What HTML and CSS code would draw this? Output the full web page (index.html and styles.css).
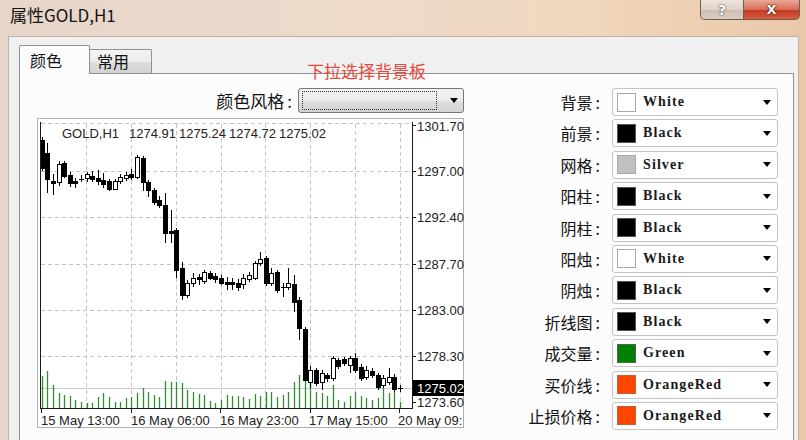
FILE: index.html
```html
<!DOCTYPE html>
<html>
<head>
<meta charset="utf-8">
<title>属性GOLD,H1</title>
<link rel="stylesheet" href="styles.css">
</head>
<body>
<div class="window">
  <div class="titlebar">
    <div class="title">属性GOLD,H1</div>
    <div class="caption-btns">
      <div class="cbtn help">?</div>
      <div class="cbtn close">X</div>
    </div>
  </div>
  <div class="client">
    <div class="tabs">
      <div class="tab active">颜色</div>
      <div class="tab inactive">常用</div>
    </div>
    <div class="page">
      <div class="note">下拉选择背景板</div>
      <div class="left">
        <div class="style-row">
          <span class="lbl">颜色风格<span class="colon">:</span></span>
          <div class="style-combo"><div class="focus"></div><span class="arrow"></span></div>
        </div>
        <div class="chart">
          <svg id="chart-svg" width="427" height="310" viewBox="37 118 427 310">
            <rect x="37.5" y="118.5" width="426" height="309" fill="#fff" stroke="#b0b0b0"/>
            <g stroke="#c4c4c4" stroke-dasharray="4 3">
              <line x1="41" x2="412" y1="123.5" y2="123.5"/>
              <line x1="41" x2="412" y1="171.5" y2="171.5"/>
              <line x1="41" x2="412" y1="217.5" y2="217.5"/>
              <line x1="41" x2="412" y1="264.5" y2="264.5"/>
              <line x1="41" x2="412" y1="310.5" y2="310.5"/>
              <line x1="41" x2="412" y1="356.5" y2="356.5"/>
              <line x1="86.5" x2="86.5" y1="124" y2="408"/>
              <line x1="131.5" x2="131.5" y1="124" y2="408"/>
              <line x1="176.5" x2="176.5" y1="124" y2="408"/>
              <line x1="221.5" x2="221.5" y1="124" y2="408"/>
              <line x1="265.5" x2="265.5" y1="124" y2="408"/>
              <line x1="310.5" x2="310.5" y1="124" y2="408"/>
              <line x1="355.5" x2="355.5" y1="124" y2="408"/>
              <line x1="400.5" x2="400.5" y1="124" y2="408"/>
            </g>
            <line x1="41" x2="412" y1="388.5" y2="388.5" stroke="#c8c8c8"/>
            <g id="volumes" stroke="#2f8f2f" stroke-width="1.3"></g>
            <g id="candles" stroke="#000" stroke-width="1"></g>
            <g stroke="#1a1a1a" stroke-width="1">
              <line x1="40.5" x2="40.5" y1="122" y2="409"/>
              <line x1="412.5" x2="412.5" y1="122" y2="409"/>
              <line x1="40" x2="413" y1="408.5" y2="408.5"/>
              <line x1="412" x2="416" y1="125.5" y2="125.5"/>
              <line x1="412" x2="416" y1="171.5" y2="171.5"/>
              <line x1="412" x2="416" y1="217.5" y2="217.5"/>
              <line x1="412" x2="416" y1="264.5" y2="264.5"/>
              <line x1="412" x2="416" y1="310.5" y2="310.5"/>
              <line x1="412" x2="416" y1="356.5" y2="356.5"/>
              <line x1="412" x2="416" y1="402.5" y2="402.5"/>
              <line x1="41.5" x2="41.5" y1="408" y2="413"/>
              <line x1="131.5" x2="131.5" y1="408" y2="413"/>
              <line x1="220.5" x2="220.5" y1="408" y2="413"/>
              <line x1="310.5" x2="310.5" y1="408" y2="413"/>
              <line x1="399.5" x2="399.5" y1="408" y2="413"/>
            </g>
            <text class="ax" x="62" y="138">GOLD,H1</text>
            <text class="ax" x="129" y="138">1274.91</text>
            <text class="ax" x="179" y="138">1275.24</text>
            <text class="ax" x="229" y="138">1274.72</text>
            <text class="ax" x="279" y="138">1275.02</text>
            <text class="ax" x="417" y="130.5">1301.70</text>
            <text class="ax" x="417" y="176">1297.00</text>
            <text class="ax" x="417" y="222">1292.40</text>
            <text class="ax" x="417" y="269">1287.70</text>
            <text class="ax" x="417" y="315">1283.00</text>
            <text class="ax" x="417" y="361">1278.30</text>
            <text class="ax" x="417" y="407">1273.60</text>
            <rect x="413" y="380" width="51" height="16" fill="#000"/>
            <text class="ax ax-inv" x="417" y="392.5">1275.02</text>
            <text class="ax" x="41" y="425">15 May 13:00</text>
            <text class="ax" x="131" y="425">16 May 06:00</text>
            <text class="ax" x="220" y="425">16 May 23:00</text>
            <text class="ax" x="309" y="425">17 May 15:00</text>
            <text class="ax" x="398" y="425">20 May 09:</text>
          </svg>
        </div>
      </div>
      <div class="right">
        <div class="row"><span class="name">背景<span class="colon">:</span></span><div class="combo"><span class="swatch sw-white"></span><span class="cname">White</span><span class="arrow"></span></div></div>
        <div class="row"><span class="name">前景<span class="colon">:</span></span><div class="combo"><span class="swatch sw-black"></span><span class="cname">Black</span><span class="arrow"></span></div></div>
        <div class="row"><span class="name">网格<span class="colon">:</span></span><div class="combo"><span class="swatch sw-silver"></span><span class="cname">Silver</span><span class="arrow"></span></div></div>
        <div class="row"><span class="name">阳柱<span class="colon">:</span></span><div class="combo"><span class="swatch sw-black"></span><span class="cname">Black</span><span class="arrow"></span></div></div>
        <div class="row"><span class="name">阴柱<span class="colon">:</span></span><div class="combo"><span class="swatch sw-black"></span><span class="cname">Black</span><span class="arrow"></span></div></div>
        <div class="row"><span class="name">阳烛<span class="colon">:</span></span><div class="combo"><span class="swatch sw-white"></span><span class="cname">White</span><span class="arrow"></span></div></div>
        <div class="row"><span class="name">阴烛<span class="colon">:</span></span><div class="combo"><span class="swatch sw-black"></span><span class="cname">Black</span><span class="arrow"></span></div></div>
        <div class="row"><span class="name">折线图<span class="colon">:</span></span><div class="combo"><span class="swatch sw-black"></span><span class="cname">Black</span><span class="arrow"></span></div></div>
        <div class="row"><span class="name">成交量<span class="colon">:</span></span><div class="combo"><span class="swatch sw-green"></span><span class="cname">Green</span><span class="arrow"></span></div></div>
        <div class="row"><span class="name">买价线<span class="colon">:</span></span><div class="combo"><span class="swatch sw-orangered"></span><span class="cname">OrangeRed</span><span class="arrow"></span></div></div>
        <div class="row"><span class="name">止损价格<span class="colon">:</span></span><div class="combo"><span class="swatch sw-orangered"></span><span class="cname">OrangeRed</span><span class="arrow"></span></div></div>
      </div>
    </div>
  </div>
</div>
<script src="chart.js"></script>
</body>
</html>
```

FILE: styles.css
```css
* { box-sizing: border-box; margin: 0; padding: 0; }
html, body { margin: 0; width: 806px; height: 440px; overflow: hidden; }
body { font-family: "Noto Sans CJK SC", "Noto Sans", sans-serif; color: #111; }

.window {
  width: 806px; height: 440px;
  display: flex; flex-direction: column;
  background: linear-gradient(90deg, #e6d5c9 0%, #ecdacb 40%, #f1d8c0 70%, #e9c8a8 100%);
  overflow: hidden;
}

.titlebar { height: 36px; flex: none; display: flex; justify-content: space-between; align-items: flex-start; }
.title { font-size: 17px; line-height: 30px; padding-left: 10px; color: #141414; }
.caption-btns { display: flex; margin-right: 6px; height: 20px; }
.cbtn {
  height: 20px; display: flex; align-items: center; justify-content: center;
  font-family: "DejaVu Sans", sans-serif; font-weight: bold; color: #fff;
  border: 1px solid #6f5e54; border-top: none;
}
.help {
  width: 44px; border-radius: 0 0 0 5px; font-size: 14px;
  background: linear-gradient(#efe5dd, #e0d2c7 50%, #cdbcb0 52%, #dccbbf);
  text-shadow: 0 0 1px #555, 0 0 1px #555, 0 0 2px #777;
}
.close {
  width: 56px; border-left: none; border-radius: 0 0 5px 0; font-size: 13px;
  background: linear-gradient(#eaa898, #d86c56 50%, #c4381f 52%, #d65c40);
  text-shadow: 0 0 1px #4a1000, 0 0 1px #4a1000, 0 0 2px #4a1000;
}

.client {
  flex: 1; margin: 0 7px 0 8px;
  background: #f0f0f0;
  border: 1px solid #c2b2a4; border-bottom: none;
  padding: 8px 4px 0 10px;
  display: flex; flex-direction: column;
}

.tabs { display: flex; height: 28px; align-items: flex-end; flex: none; }
.tab { font-size: 16px; border: 1px solid #8d9099; border-bottom: none; color: #111; }
.tab.active {
  width: 71px; height: 29px; margin-bottom: -1px; line-height: 28px;
  padding-left: 10px; background: #fcfcfc; position: relative; z-index: 1;
  border-radius: 2px 2px 0 0;
}
.tab.inactive {
  width: 63px; height: 24px; margin-left: -1px; line-height: 23px; padding-left: 7px;
  background: linear-gradient(#f3f3f3, #ececec 50%, #dedede 52%, #d2d2d2);
  border-radius: 2px 2px 0 0;
}

.page {
  flex: 1; background: #fcfcfc;
  border: 1px solid #8d9099; border-bottom: none;
  display: flex; padding: 14px 15px 0 17px;
  position: relative;
}
.note {
  position: absolute; left: 287px; top: -12px;
  font-size: 17px; line-height: 18px; color: #e6483b;
}

.left { width: 427px; flex: none; display: flex; flex-direction: column; gap: 5px; }
.style-row { height: 25px; display: flex; justify-content: flex-end; align-items: center; gap: 6px; }
.lbl { font-size: 17px; line-height: 20px; }
.colon { padding-left: 3px; }
.style-combo {
  width: 166px; height: 25px; border: 1px solid #767676; border-radius: 3px;
  background: linear-gradient(#f3f3f3, #ececec 50%, #dfdfdf 52%, #d3d3d3);
  display: flex; align-items: center; padding: 0 5px 0 3px;
}
.focus { width: 135px; height: 19px; border: 1px dotted #333; }
.arrow {
  margin-left: auto; width: 0; height: 0;
  border-left: 4.5px solid transparent; border-right: 4.5px solid transparent;
  border-top: 5px solid #000;
}

.chart { width: 427px; height: 310px; flex: none; background: #fff; }
.chart svg { display: block; }
.ax { font-family: "Liberation Sans", Arial, sans-serif; font-size: 13px; fill: #222; }
.ax-inv { fill: #fff; }

.right { flex: 1; display: flex; flex-direction: column; gap: 3.4px; }
.row { height: 28px; display: flex; justify-content: flex-end; align-items: center; gap: 12px; }
.name { font-size: 16px; line-height: 20px; }
.combo {
  width: 166px; height: 28px; border: 1px solid #c4c4c4; border-radius: 3px;
  background: #fff; display: flex; align-items: center; padding: 0 6px 0 4px;
}
.swatch { width: 19px; height: 19px; border: 1px solid #8c8c8c; flex: none; }
.sw-white { background: #fff; border-color: #a8a8a8; }
.sw-black { background: #000; border-color: #555; }
.sw-silver { background: #c0c0c0; border-color: #a8a8a8; }
.sw-green { background: #008000; border-color: #4a6a4a; }
.sw-orangered { background: #ff4500; border-color: #b86040; }
.cname {
  font-family: "Liberation Serif", serif; font-size: 14px; font-weight: bold;
  letter-spacing: 1.1px; margin-left: 7px; color: #1a1a1a;
}
```

FILE: chart.js
```js
(function () {
  var NS = 'http://www.w3.org/2000/svg';
  function add(parent, name, attrs) {
    var e = document.createElementNS(NS, name);
    for (var k in attrs) e.setAttribute(k, attrs[k]);
    parent.appendChild(e);
    return e;
  }
  // [bodyTop, bodyBottom, high, low, type] in chart pixel rows
  var C = [
    [140,168,137,171,'b'],[153,179,143,193,'b'],[181,183,174,195,'b'],[164,182,161,186,'w'],
    [163,176,161,178,'b'],[175,183,172,187,'b'],[181,183,178,188,'b'],[179,180,175,182,'b'],
    [174,178,172,182,'w'],[176,179,171,182,'b'],[178,181,170,185,'b'],[180,184,173,188,'b'],
    [181,189,179,191,'b'],[181,189,179,190,'w'],[177,181,174,184,'w'],[175,178,172,181,'w'],
    [174,177,169,180,'b'],[157,177,155,179,'w'],[158,182,156,191,'b'],[182,190,180,197,'b'],
    [190,202,188,205,'b'],[200,205,196,208,'b'],[205,233,193,243,'b'],[231,233,210,243,'b'],
    [230,270,228,278,'b'],[268,295,262,300,'b'],[283,295,280,298,'w'],[278,283,273,287,'w'],
    [277,279,274,285,'b'],[272,281,270,284,'w'],[273,278,271,280,'b'],[276,279,273,283,'b'],
    [278,283,275,285,'b'],[282,284,277,290,'b'],[282,284,278,290,'b'],[283,287,279,291,'b'],
    [278,284,274,289,'w'],[275,279,272,282,'w'],[263,278,261,280,'w'],[259,263,252,266,'w'],
    [258,283,256,286,'b'],[273,283,268,286,'w'],[272,290,270,293,'b'],[287,288,283,297,'b'],
    [283,287,268,290,'w'],[284,302,275,312,'b'],[300,328,297,340,'b'],[329,380,327,382,'b'],
    [370,382,366,388,'w'],[370,383,368,386,'b'],[373,382,370,390,'w'],[375,378,373,382,'b'],
    [358,378,356,381,'w'],[360,366,358,369,'b'],[359,363,357,366,'b'],[358,365,356,373,'w'],
    [358,370,353,373,'b'],[367,378,364,381,'b'],[370,377,366,380,'w'],[371,375,368,378,'b'],
    [375,387,373,390,'b'],[378,385,375,388,'w'],[377,382,368,385,'w'],[377,389,374,392,'b'],
    [388,389,385,392,'b']
  ];
  var V = [376,371,385,393,395,396,400,402,403,403,397,393,397,402,402,398,397,393,388,392,
           395,397,381,382,382,383,390,392,394,395,401,403,400,395,396,396,397,399,394,396,
           392,392,397,395,392,382,375,373,375,392,393,396,385,400,402,396,392,396,398,400,
           398,388,393,389,402];
  var volG = document.getElementById('volumes');
  var candleG = document.getElementById('candles');
  var x0 = 41.7, step = 5.6;
  for (var i = 0; i < C.length; i++) {
    var cx = Math.round(x0 + i * step) + 0.5;
    if (V[i]) add(volG, 'line', { x1: cx, x2: cx, y1: 408, y2: V[i] });
    var c = C[i];
    add(candleG, 'line', { x1: cx, x2: cx, y1: c[2], y2: c[3] });
    if (c[1] - c[0] <= 1) {
      add(candleG, 'line', { x1: cx - 2.5, x2: cx + 2.5, y1: c[0] + 0.5, y2: c[0] + 0.5 });
    } else {
      add(candleG, 'rect', { x: cx - 2, y: c[0] + 0.5, width: 4, height: c[1] - c[0],
        fill: c[4] === 'w' ? '#fff' : '#000' });
    }
  }
})();
```
